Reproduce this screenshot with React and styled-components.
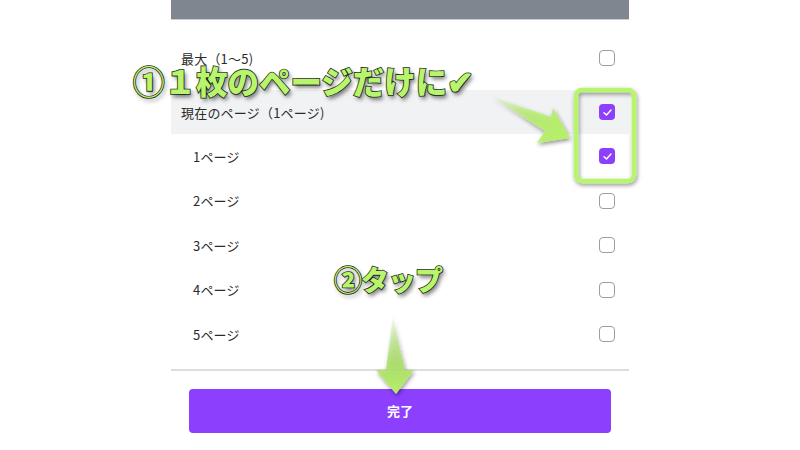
import React from 'react';
import styled, { createGlobalStyle } from 'styled-components';

const GlobalStyle = createGlobalStyle`
  html, body {
    margin: 0;
    padding: 0;
    background: #ffffff;
  }
  body {
    font-family: "Noto Sans CJK JP", "Noto Sans", sans-serif;
    color: #2b2b2b;
  }
`;

const Page = styled.div`
  position: relative;
  width: 800px;
  height: 450px;
  overflow: hidden;
  background: #fff;
`;

const Panel = styled.div`
  width: 458px;
  margin-left: 171px;
  display: flex;
  flex-direction: column;
`;

const TopBar = styled.div`
  height: 19px;
  background: #80868f;
  border-bottom: 1px solid #c9ccd1;
`;

const List = styled.div`
  display: flex;
  flex-direction: column;
  padding-top: 16px;
`;

const Row = styled.div`
  display: flex;
  align-items: center;
  justify-content: space-between;
  height: ${(p) => p.$h || 44.5}px;
  padding-left: ${(p) => (p.$sub ? 22 : 10)}px;
  padding-right: 14px;
  margin-bottom: ${(p) => p.$gap || 0}px;
  background: ${(p) => (p.$active ? '#f1f2f4' : 'transparent')};
  font-size: 13px;
  letter-spacing: 0.2px;
`;

const Box = styled.span`
  width: 16px;
  height: 16px;
  box-sizing: border-box;
  border-radius: 4px;
  border: ${(p) => (p.$on ? 'none' : '1.5px solid #9b9ea3')};
  background: ${(p) => (p.$on ? '#8d3ffe' : '#fff')};
  display: flex;
  align-items: center;
  justify-content: center;
`;

const Divider = styled.div`
  height: 2px;
  background: #dcdee1;
  margin-top: 12px;
`;

const Footer = styled.div`
  padding: 18px 18px 0;
`;

const DoneButton = styled.button`
  width: 100%;
  height: 44px;
  border: none;
  border-radius: 4px;
  background: #8d3ffe;
  color: #fff;
  font-family: "Noto Sans CJK JP", sans-serif;
  font-weight: 700;
  font-size: 13px;
`;

const Note = styled.div`
  position: absolute;
  left: ${(p) => p.$x}px;
  top: ${(p) => p.$y}px;
  font-family: "Noto Sans CJK JP", sans-serif;
  font-weight: 900;
  font-size: ${(p) => p.$size}px;
  letter-spacing: ${(p) => p.$ls || 0}px;
  line-height: 1;
  white-space: nowrap;
  color: #b6f56c;
  -webkit-text-stroke: 1.6px #2c2f25;
  paint-order: stroke fill;
  text-shadow: 2px 3px 4px rgba(0, 0, 0, 0.55);
`;

const Overlay = styled.svg`
  position: absolute;
  left: 0;
  top: 0;
  pointer-events: none;
`;

function Check({ on }) {
  return (
    <Box $on={on}>
      {on && (
        <svg width="11" height="11" viewBox="0 0 12 12">
          <path d="M2.2 6.3 L4.9 8.8 L9.8 3.4" fill="none" stroke="#fff" strokeWidth="1.6" strokeLinecap="round" strokeLinejoin="round" />
        </svg>
      )}
    </Box>
  );
}

const pages = [
  { label: '1ページ', on: true },
  { label: '2ページ', on: false },
  { label: '3ページ', on: false },
  { label: '4ページ', on: false },
  { label: '5ページ', on: false },
];

export default function App() {
  return (
    <Page>
      <GlobalStyle />
      <Panel>
        <TopBar />
        <List>
          <Row $h={44} $gap={10}>
            <span>最大（1〜5)</span>
            <Check />
          </Row>
          <Row $h={44} $active>
            <span>現在のページ（1ページ)</span>
            <Check on />
          </Row>
          {pages.map((p) => (
            <Row key={p.label} $sub>
              <span>{p.label}</span>
              <Check on={p.on} />
            </Row>
          ))}
        </List>
        <Divider />
        <Footer>
          <DoneButton>完了</DoneButton>
        </Footer>
      </Panel>

      <Overlay width="800" height="450" viewBox="0 0 800 450">
        <defs>
          <linearGradient id="a1" x1="0" y1="0" x2="1" y2="0.4">
            <stop offset="0" stopColor="#b6ef6a" stopOpacity="0.1" />
            <stop offset="0.6" stopColor="#b6ef6a" stopOpacity="0.8" />
            <stop offset="1" stopColor="#b6ef6a" />
          </linearGradient>
          <linearGradient id="a2" x1="0" y1="0" x2="0" y2="1">
            <stop offset="0" stopColor="#a9df63" stopOpacity="0.1" />
            <stop offset="0.6" stopColor="#a9df63" stopOpacity="0.85" />
            <stop offset="1" stopColor="#b6ef6a" />
          </linearGradient>
          <filter id="sh" x="-20%" y="-20%" width="140%" height="140%">
            <feDropShadow dx="1" dy="2" stdDeviation="2" floodColor="#000" floodOpacity="0.45" />
          </filter>
        </defs>
        <rect x="576" y="90" width="58" height="91" rx="6" fill="none" stroke="#b6f56c" strokeWidth="4.5" filter="url(#sh)" />
        <polygon points="490,96 551,117 553,108 570,138 537,143 545,131" fill="url(#a1)" filter="url(#sh)" />
        <polygon points="393,316 405,370 414,370 396,394 376,370 386,370" fill="url(#a2)" filter="url(#sh)" />
      </Overlay>
      <Note $x={133} $y={65} $size={31.5} $ls={0}>①１枚のページだけに✔</Note>
      <Note $x={334} $y={265} $size={28} $ls={-1}>②タップ</Note>
    </Page>
  );
}
